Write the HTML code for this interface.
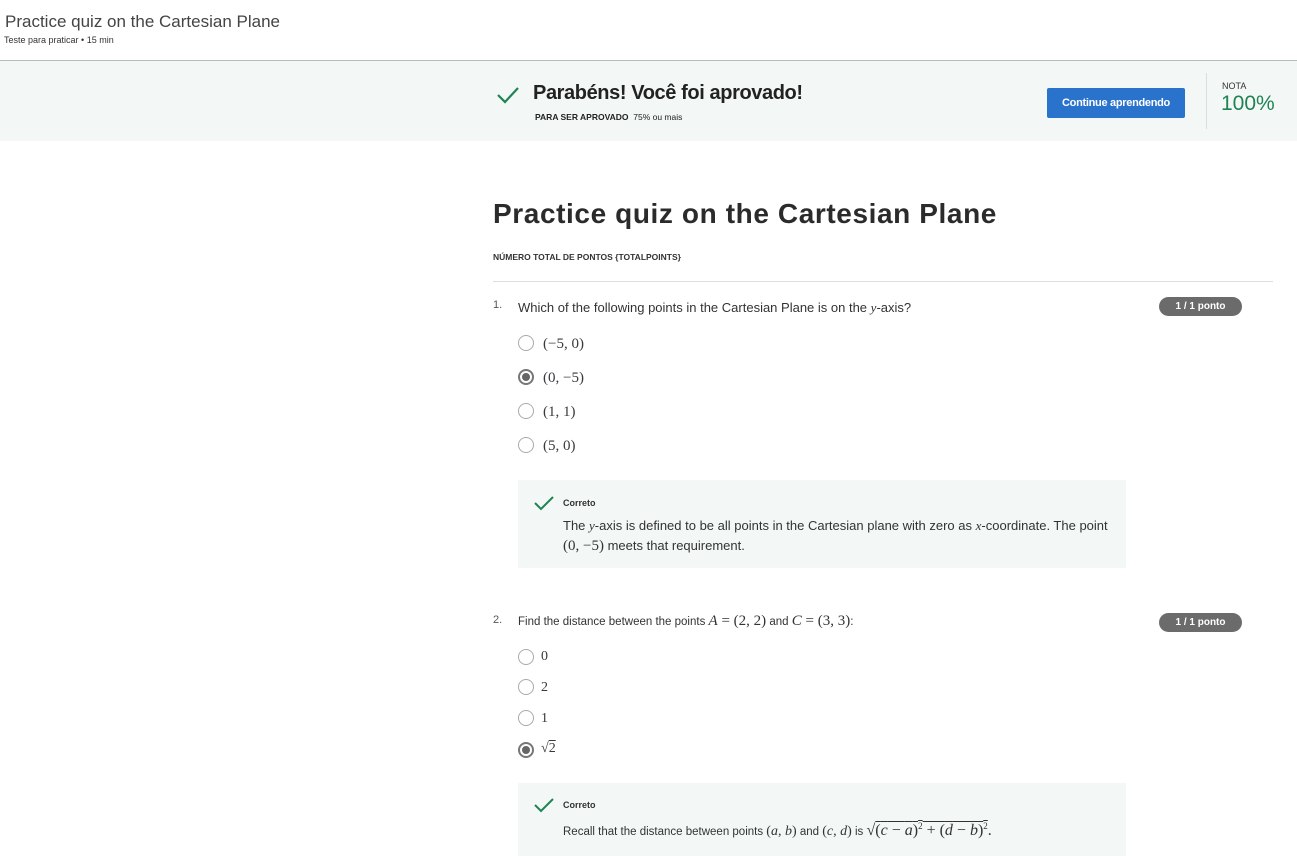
<!DOCTYPE html>
<html><head><meta charset="utf-8"><style>
*{margin:0;padding:0;box-sizing:border-box}
body{width:1297px;height:856px;background:#fff;font-family:"Liberation Sans",sans-serif;color:#373a3c;position:relative;overflow:hidden}
.a{position:absolute;white-space:nowrap;line-height:1}
.m{font-family:"Liberation Serif",serif}
.m i{font-style:italic}
.r{position:absolute;width:16px;height:16px;border:1.5px solid #aaa;border-radius:50%;left:518px}
.r.s{border:2px solid #777}
.r.s:after{content:"";position:absolute;left:2px;top:2px;width:8px;height:8px;border-radius:50%;background:#666}
.badge{position:absolute;left:1159px;width:83px;height:19px;border-radius:10px;background:#6b6b6b;color:#fff;font-size:10px;font-weight:bold;text-align:center;line-height:19px}
.fb{position:absolute;left:518px;width:608px;background:#f3f8f6}
</style></head><body>
<div class="a" style="left:5px;top:13px;font-size:17px;color:#444">Practice quiz on the Cartesian Plane</div>
<div class="a" style="left:4px;top:36px;font-size:9px;color:#333">Teste para praticar • 15 min</div>
<div style="position:absolute;left:0;top:60px;width:1297px;height:81px;background:#f3f8f6;border-top:1px solid #bbb"></div>
<svg style="position:absolute;left:496px;top:85px" width="24" height="20" viewBox="0 0 24 20"><path d="M2 10 L9 17 L22 3" fill="none" stroke="#1f8354" stroke-width="2.2"/></svg>
<div class="a" style="left:533px;top:83px;font-size:20px;font-weight:bold;letter-spacing:-0.4px;color:#222">Parabéns! Você foi aprovado!</div>
<div class="a" style="left:535px;top:113px;font-size:8.5px;color:#222"><b>PARA SER APROVADO</b>&nbsp; 75% ou mais</div>
<div style="position:absolute;left:1047px;top:88px;width:138px;height:30px;background:#2a73cc;border-radius:2px;color:#fff;font-size:11px;font-weight:bold;text-align:center;line-height:30px;letter-spacing:-0.3px">Continue aprendendo</div>
<div style="position:absolute;left:1206px;top:73px;width:1px;height:56px;background:#ddd"></div>
<div class="a" style="left:1222px;top:82px;font-size:9px;color:#333">NOTA</div>
<div class="a" style="left:1221px;top:93px;font-size:21px;color:#1f8354">100%</div>

<div class="a" style="left:493px;top:200px;font-size:28px;font-weight:bold;letter-spacing:0.6px;color:#2b2b2b">Practice quiz on the Cartesian Plane</div>
<div class="a" style="left:493px;top:253px;font-size:8.5px;font-weight:bold;color:#333">NÚMERO TOTAL DE PONTOS {TOTALPOINTS}</div>
<div style="position:absolute;left:493px;top:281px;width:780px;height:1px;background:#ddd"></div>

<div class="a" style="left:493px;top:300px;font-size:11px;color:#555">1.</div>
<div class="a" style="left:518px;top:301px;font-size:13px;color:#333">Which of the following points in the Cartesian Plane is on the <span class="m"><i>y</i></span>-axis?</div>
<div class="badge" style="top:297px">1 / 1 ponto</div>
<div class="r" style="top:335px"></div><div class="a m" style="left:543px;top:337px;font-size:15px">(−5, 0)</div>
<div class="r s" style="top:369px"></div><div class="a m" style="left:543px;top:371px;font-size:15px">(0, −5)</div>
<div class="r" style="top:403px"></div><div class="a m" style="left:543px;top:405px;font-size:15px">(1, 1)</div>
<div class="r" style="top:437px"></div><div class="a m" style="left:543px;top:439px;font-size:15px">(5, 0)</div>
<div class="fb" style="top:480px;height:88px"></div>
<svg style="position:absolute;left:534px;top:495px" width="20" height="17" viewBox="0 0 20 17"><path d="M1 8 L7 14 L19 2" fill="none" stroke="#1f8354" stroke-width="2"/></svg>
<div class="a" style="left:563px;top:499px;font-size:9px;font-weight:bold;color:#333">Correto</div>
<div class="a" style="left:563px;top:519px;font-size:13px;color:#333">The <span class="m"><i>y</i></span>-axis is defined to be all points in the Cartesian plane with zero as <span class="m"><i>x</i></span>-coordinate. The point</div>
<div class="a" style="left:563px;top:539px;font-size:13px;color:#333"><span class="m" style="font-size:15px">(0, −5)</span> meets that requirement.</div>

<div class="a" style="left:493px;top:615px;font-size:11px;color:#555">2.</div>
<div class="a" style="left:518px;top:614px;font-size:11.5px;color:#333">Find the distance between the points <span class="m" style="font-size:15px"><i>A</i> = (2, 2)</span> and <span class="m" style="font-size:15px"><i>C</i> = (3, 3)</span>:</div>
<div class="badge" style="top:613px">1 / 1 ponto</div>
<div class="r" style="top:649px"></div><div class="a m" style="left:541px;top:650px;font-size:14px">0</div>
<div class="r" style="top:679px"></div><div class="a m" style="left:541px;top:681px;font-size:14px">2</div>
<div class="r" style="top:710px"></div><div class="a m" style="left:541px;top:712px;font-size:14px">1</div>
<div class="r s" style="top:742px"></div><div class="a m" style="left:541px;top:742px;font-size:14px">√<span style="text-decoration:overline">2</span></div>
<div class="fb" style="top:783px;height:73px"></div>
<svg style="position:absolute;left:534px;top:797px" width="20" height="17" viewBox="0 0 20 17"><path d="M1 8 L7 14 L19 2" fill="none" stroke="#1f8354" stroke-width="2"/></svg>
<div class="a" style="left:563px;top:801px;font-size:9px;font-weight:bold;color:#333">Correto</div>
<div class="a" style="left:563px;top:822px;font-size:11.5px;color:#333">Recall that the distance between points <span class="m" style="font-size:14px">(<i>a</i>, <i>b</i>)</span> and <span class="m" style="font-size:14px">(<i>c</i>, <i>d</i>)</span> is <span class="m" style="font-size:16px">√<span style="text-decoration:overline">(<i>c</i> − <i>a</i>)<span style="font-size:9px;vertical-align:6px">2</span> + (<i>d</i> − <i>b</i>)<span style="font-size:9px;vertical-align:6px">2</span></span>.</span></div>
</body></html>
